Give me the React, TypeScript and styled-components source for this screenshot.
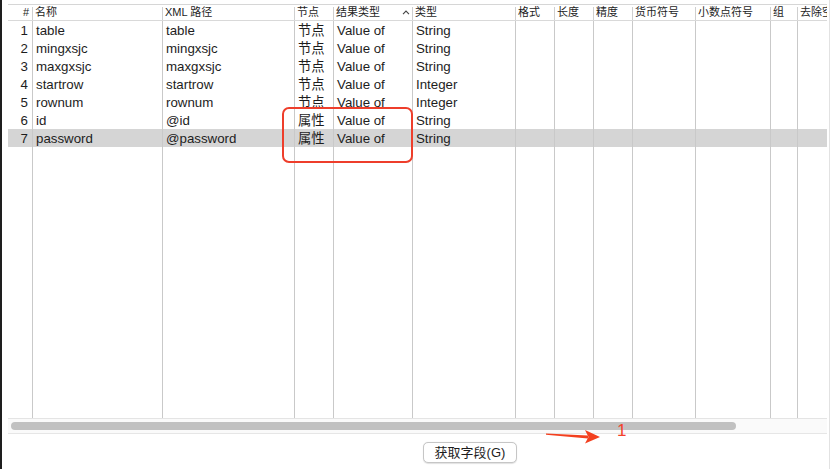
import React from "react";
import styled, { createGlobalStyle } from "styled-components";

const GlobalStyle = createGlobalStyle`
  *, *::before, *::after {
    box-sizing: border-box;
  }
  html, body {
    margin: 0;
    padding: 0;
    background: #ffffff;
  }
  body {
    font-family: "Liberation Sans", "Noto Sans CJK SC", sans-serif;
    color: #1d1d1d;
  }
`;

const COLS = "25px 130px 132px 39px 79px 103px 39px 39px 39px 63px 75px 27px 1fr";

const columns = [
  "#",
  "名称",
  "XML 路径",
  "节点",
  "结果类型",
  "类型",
  "格式",
  "长度",
  "精度",
  "货币符号",
  "小数点符号",
  "组",
  "去除空格",
];

const rows = [
  ["table", "table", "节点", "Value of", "String"],
  ["mingxsjc", "mingxsjc", "节点", "Value of", "String"],
  ["maxgxsjc", "maxgxsjc", "节点", "Value of", "String"],
  ["startrow", "startrow", "节点", "Value of", "Integer"],
  ["rownum", "rownum", "节点", "Value of", "Integer"],
  ["id", "@id", "属性", "Value of", "String"],
  ["password", "@password", "属性", "Value of", "String"],
];

const SELECTED = 6;

const Window = styled.div`
  position: relative;
  width: 830px;
  height: 469px;
  border-left: 2px solid #1e1e1e;
  border-right: 1px solid #e2e2e2;
  padding: 4px 2px 0 6px;
  display: flex;
  flex-direction: column;
  overflow: hidden;
`;

const Table = styled.div`
  height: 414px;
  display: flex;
  flex-direction: column;
  border-top: 1px solid #d6d6d6;
  overflow: hidden;
`;

const HeaderRow = styled.div`
  display: grid;
  grid-template-columns: ${COLS};
  height: 16px;
  border-bottom: 1px solid #d9d9d9;
  font-size: 11px;
  line-height: 15px;
`;

const HeaderCell = styled.div<{ $right?: boolean }>`
  position: relative;
  padding: 0 ${(p) => (p.$right ? "4px" : "0")} 0 ${(p) => (p.$right ? "0" : "2px")};
  white-space: nowrap;
  overflow: hidden;
  display: flex;
  justify-content: ${(p) => (p.$right ? "flex-end" : "space-between")};
  align-items: center;
  &::after {
    content: "";
    position: absolute;
    right: 0;
    top: 2px;
    bottom: 0;
    width: 1px;
    background: #cfcfcf;
  }
  &:last-child::after {
    display: none;
  }
`;

const SortMark = styled.svg`
  width: 8px;
  height: 5px;
  margin-right: 3px;
  flex-shrink: 0;
`;

const Row = styled.div<{ $selected?: boolean }>`
  display: grid;
  grid-template-columns: ${COLS};
  height: 18px;
  background: ${(p) => (p.$selected ? "#d5d5d5" : "transparent")};
  font-size: 13.3px;
  line-height: 18px;
`;

const Cell = styled.div<{ $right?: boolean }>`
  border-right: 1px solid #c9c9c9;
  padding: ${(p) => (p.$right ? "1px 4px 0 0" : "1px 0 0 3px")};
  text-align: ${(p) => (p.$right ? "right" : "left")};
  white-space: nowrap;
  overflow: hidden;
  &:last-child {
    border-right: none;
  }
`;

const Filler = styled.div`
  flex: 1;
  display: grid;
  grid-template-columns: ${COLS};
`;

const FillCell = styled.div`
  border-right: 1px solid #c9c9c9;
  &:last-child {
    border-right: none;
  }
`;

const Track = styled.div`
  height: 16px;
  border-top: 1px solid #e4e4e4;
  border-bottom: 1px solid #e6e6e6;
  background: #fafafa;
  padding: 3px 0 0 3px;
`;

const Thumb = styled.div`
  width: 725px;
  height: 8px;
  border-radius: 4px;
  background: #c1c1c1;
`;

const Footer = styled.div`
  display: flex;
  padding: 8px 0 0 415px;
`;

const Button = styled.button`
  width: 94px;
  height: 21px;
  border: 1px solid #c6c6c6;
  border-radius: 5px;
  background: #ffffff;
  box-shadow: 0 0.5px 1px rgba(0, 0, 0, 0.12);
  font-family: "Liberation Sans", "Noto Sans CJK SC", sans-serif;
  font-size: 13px;
  color: #1d1d1d;
  padding: 0;
  line-height: 19px;
`;

const Highlight = styled.div`
  position: absolute;
  left: 280px;
  top: 107px;
  width: 131px;
  height: 56px;
  border: 2px solid #ee3e2b;
  border-radius: 7px;
`;

const Arrow = styled.svg`
  position: absolute;
  left: 540px;
  top: 426px;
  width: 62px;
  height: 20px;
`;

const Mark = styled.div`
  position: absolute;
  left: 615px;
  top: 421px;
  font-family: "Liberation Sans", sans-serif;
  font-size: 17px;
  font-weight: 300;
  color: #f4412b;
`;

export default function App() {
  return (
    <>
      <GlobalStyle />
      <Window>
        <Table>
          <HeaderRow>
            {columns.map((c, i) => (
              <HeaderCell key={c} $right={i === 0}>
                <span>{c}</span>
                {c === "结果类型" && (
                  <SortMark viewBox="0 0 8 5">
                    <path d="M1 4.2 L4 1 L7 4.2" fill="none" stroke="#444" strokeWidth="1.1" />
                  </SortMark>
                )}
              </HeaderCell>
            ))}
          </HeaderRow>
          {rows.map((r, i) => (
            <Row key={i} $selected={i === SELECTED}>
              <Cell $right>{i + 1}</Cell>
              {r.map((v, j) => (
                <Cell key={j}>{v}</Cell>
              ))}
              {Array.from({ length: 7 }).map((_, k) => (
                <Cell key={"e" + k} />
              ))}
            </Row>
          ))}
          <Filler>
            {columns.map((c) => (
              <FillCell key={c} />
            ))}
          </Filler>
        </Table>
        <Track>
          <Thumb />
        </Track>
        <Footer>
          <Button>获取字段(G)</Button>
        </Footer>
        <Highlight />
        <Arrow viewBox="0 0 62 20">
          <path d="M4 7.4 L46 9.4 L46 12.6 L4 8.8 Z" fill="#f3401f" />
          <path d="M43 4 L58 11 L43 17.5 L46.5 11 Z" fill="#f3401f" />
        </Arrow>
        <Mark>1</Mark>
      </Window>
    </>
  );
}
